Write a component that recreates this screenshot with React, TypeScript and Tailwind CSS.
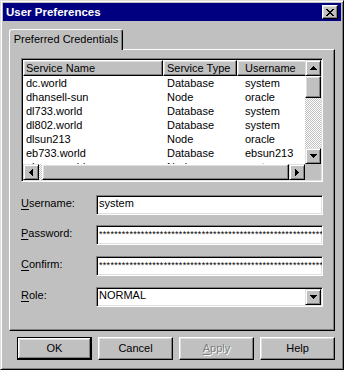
import React from 'react'

const font = "font-['Liberation_Sans',Arial,sans-serif]"

const rows = [
  ['dc.world', 'Database', 'system'],
  ['dhansell-sun', 'Node', 'oracle'],
  ['dl733.world', 'Database', 'system'],
  ['dl802.world', 'Database', 'system'],
  ['dlsun213', 'Node', 'oracle'],
  ['eb733.world', 'Database', 'ebsun213'],
  ['ebsun.world', 'Node', 'system'],
]

// small black pixel triangles used on scroll/dropdown buttons
function Arrow({ dir }: { dir: 'up' | 'down' | 'left' | 'right' }) {
  const v = dir === 'up' || dir === 'down'
  const rects = [0, 1, 2, 3].map((i) => {
    const k = dir === 'up' || dir === 'left' ? i : 3 - i
    return v
      ? <rect key={i} x={3 - k} y={i} width={k * 2 + 1} height={1} />
      : <rect key={i} x={i} y={3 - k} width={1} height={k * 2 + 1} />
  })
  return (
    <svg width={v ? 7 : 4} height={v ? 4 : 7} shapeRendering="crispEdges" className="fill-black block">
      {rects}
    </svg>
  )
}

function SmallBtn({ dir, className = '' }: { dir: 'up' | 'down' | 'left' | 'right'; className?: string }) {
  return (
    <div
      className={`w-[16px] h-[16px] shrink-0 bg-[#c0c0c0] border border-t-[#dfdfdf] border-l-[#dfdfdf] border-r-black border-b-black shadow-[inset_1px_1px_0_#fff,inset_-1px_-1px_0_#808080] flex items-center justify-center ${className}`}
    >
      <Arrow dir={dir} />
    </div>
  )
}

const dither = 'bg-[repeating-conic-gradient(#c0c0c0_0%_25%,#ffffff_0%_50%)] bg-size-[2px_2px]'
const sunken =
  'border border-t-[#808080] border-l-[#808080] border-r-white border-b-white shadow-[inset_1px_1px_0_#000,inset_-1px_-1px_0_#dfdfdf] p-[1px]'
const raised =
  'border border-t-white border-l-white border-r-black border-b-black shadow-[inset_-1px_-1px_0_#808080,inset_1px_1px_0_#dfdfdf]'

function Field({ label, u, children, className = '' }: { label: string; u: string; children: React.ReactNode; className?: string }) {
  return (
    <div className={`flex items-start ${className}`}>
      <div className="w-[75px] pt-[2px] leading-[13px]">
        <span className="underline underline-offset-[2px]">{u}</span>{label}
      </div>
      <div className={`w-[227px] h-[20px] bg-white ${sunken} flex items-start leading-[13px] overflow-hidden whitespace-nowrap`}>
        {children}
      </div>
    </div>
  )
}

export default function App() {
  const stars = '*'.repeat(70)
  return (
    <div
      className={`${font} text-[11px] text-black w-[344px] h-[370px] bg-[#c0c0c0] border border-t-[#dfdfdf] border-l-[#dfdfdf] border-r-black border-b-black shadow-[inset_1px_1px_0_#fff,inset_-1px_-1px_0_#808080] p-[2px] flex flex-col`}
    >
      {/* title bar */}
      <div className="h-[18px] bg-[#000080] flex items-center pl-[3px] pr-[3px] shrink-0">
        <span className="text-white font-bold text-[11.5px] leading-[13px]">User Preferences</span>
        <div className={`ml-auto w-[16px] h-[14px] bg-[#c0c0c0] ${raised} flex items-center justify-center`}>
          <svg width="8" height="7" shapeRendering="crispEdges" className="fill-black block">
            <rect x="0" y="0" width="2" height="1" /><rect x="6" y="0" width="2" height="1" />
            <rect x="1" y="1" width="2" height="1" /><rect x="5" y="1" width="2" height="1" />
            <rect x="2" y="2" width="4" height="1" />
            <rect x="3" y="3" width="2" height="1" />
            <rect x="2" y="4" width="4" height="1" />
            <rect x="1" y="5" width="2" height="1" /><rect x="5" y="5" width="2" height="1" />
            <rect x="0" y="6" width="2" height="1" /><rect x="6" y="6" width="2" height="1" />
          </svg>
        </div>
      </div>

      {/* tab control */}
      <div className="mt-[8px] ml-[6px] w-[326px] flex flex-col">
        <div className="relative z-10 -mb-[1px] w-[114px] h-[21px] bg-[#c0c0c0] border-t border-l border-r border-t-white border-l-white border-r-black rounded-t-[3px] shadow-[inset_-1px_0_0_#808080] flex justify-center pt-[3px] leading-[13px]">
          Preferred Credentials
        </div>
        <div className="h-[282px] border border-t-white border-l-white border-r-black border-b-black shadow-[inset_-1px_-1px_0_#808080] pl-[11px] pt-[8px] flex flex-col">
          {/* list view */}
          <div className={`w-[302px] h-[124px] ${sunken} bg-white flex flex-col`}>
            <div className="flex h-[104px]">
              <div className="w-[282px] overflow-hidden">
                <div className="flex h-[16px] leading-[13px]">
                  <div className={`w-[140px] shrink-0 bg-[#c0c0c0] ${raised} pl-[2px] pt-[1px]`}>Service Name</div>
                  <div className={`w-[74px] shrink-0 bg-[#c0c0c0] ${raised} pl-[3px] pt-[1px]`}>Service Type</div>
                  <div className={`w-[100px] shrink-0 bg-[#c0c0c0] ${raised} pl-[7px] pt-[1px]`}>Username</div>
                </div>
                {rows.map((r) => (
                  <div key={r[0]} className="flex h-[14px] leading-[14px] whitespace-nowrap">
                    <div className="w-[140px] shrink-0 pl-[3px]">{r[0]}</div>
                    <div className="w-[74px] shrink-0 pl-[4px]">{r[1]}</div>
                    <div className="w-[100px] shrink-0 pl-[8px]">{r[2]}</div>
                  </div>
                ))}
              </div>
              {/* vertical scrollbar */}
              <div className="w-[16px] flex flex-col">
                <SmallBtn dir="up" />
                <div className={`h-[22px] bg-[#c0c0c0] ${raised}`} />
                <div className={`flex-1 ${dither}`} />
                <SmallBtn dir="down" />
              </div>
            </div>
            {/* horizontal scrollbar */}
            <div className="flex h-[16px]">
              <SmallBtn dir="left" />
              <div className={`w-[3px] ${dither}`} />
              <div className={`flex-1 bg-[#c0c0c0] ${raised}`} />
              <SmallBtn dir="right" />
              <div className="w-[16px] bg-[#c0c0c0]" />
            </div>
          </div>

          <Field label="sername:" u="U" className="mt-[13px]">
            <span className="pl-[1px]">system</span>
          </Field>
          <Field label="assword:" u="P" className="mt-[10px]">
            <span className="pl-[1px] pt-[2px] text-[9px] leading-[11px] tracking-[0.3px]">{stars}</span>
          </Field>
          <Field label="onfirm:" u="C" className="mt-[11px]">
            <span className="pl-[1px] pt-[2px] text-[9px] leading-[11px] tracking-[0.3px]">{stars}</span>
          </Field>
          <Field label="ole:" u="R" className="mt-[11px]">
            <span className="pl-[1px]">NORMAL</span>
            <SmallBtn dir="down" className="ml-auto" />
          </Field>
        </div>
      </div>

      {/* buttons */}
      <div className="mt-[6px] ml-[14px] flex gap-[6px] leading-[13px]">
        <button className="w-[75px] h-[23px] bg-[#c0c0c0] border border-black shadow-[inset_-1px_-1px_0_#000,inset_1px_1px_0_#fff,inset_-2px_-2px_0_#808080,inset_2px_2px_0_#dfdfdf] flex items-center justify-center">
          OK
        </button>
        <button className={`w-[75px] h-[23px] bg-[#c0c0c0] ${raised} flex items-center justify-center`}>Cancel</button>
        <button className={`w-[75px] h-[23px] bg-[#c0c0c0] ${raised} flex items-center justify-center text-[#808080] [text-shadow:1px_1px_0_#fff]`}>
          <span><span className="underline underline-offset-[2px]">A</span>pply</span>
        </button>
        <button className={`w-[75px] h-[23px] bg-[#c0c0c0] ${raised} flex items-center justify-center`}>Help</button>
      </div>
    </div>
  )
}
